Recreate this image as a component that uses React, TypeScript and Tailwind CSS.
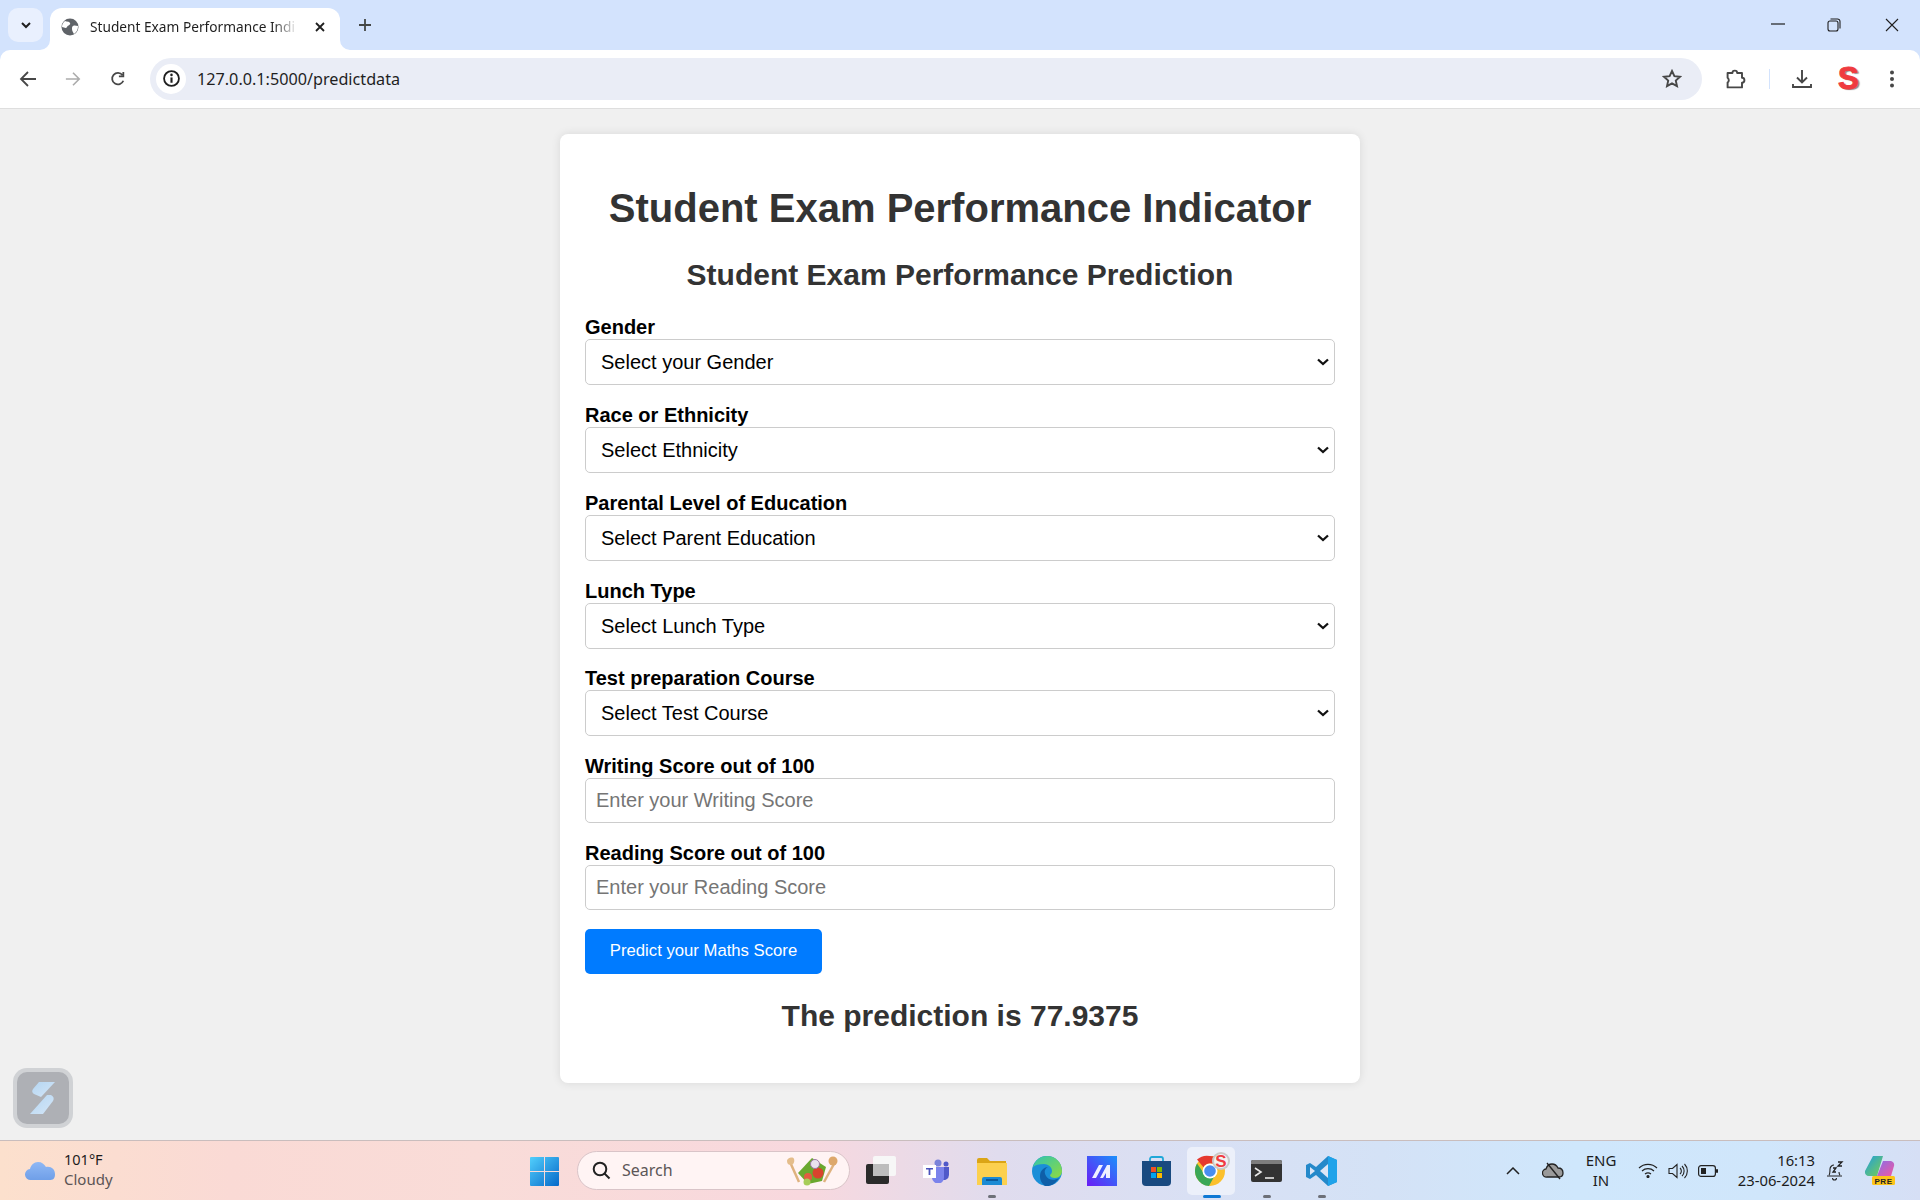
import React from "react";

const sans = "font-['Liberation_Sans',Arial,sans-serif]";
const ui = "font-['Noto_Sans','Open_Sans',sans-serif]";

function Sel({ label, text, gap = "mb-[19px]" }: { label: string; text: string; gap?: string }) {
  return (
    <div className={gap}>
      <label className="block text-[20px] leading-[23px] font-bold text-black">{label}</label>
      <div className="relative">
        <select className="block w-full h-[46px] pl-[15px] pr-[30px] text-[20px] bg-white text-black border border-[#cccccc] rounded-[5px] appearance-none">
          <option>{text}</option>
        </select>
        <svg width="12" height="8" viewBox="0 0 12 8" className="absolute right-[6px] top-[19px] pointer-events-none">
          <path d="M1 1.500l5 4.500 5-4.500" fill="none" stroke="#111" strokeWidth="2.300" />
        </svg>
      </div>
    </div>
  );
}

function Inp({ label, text, gap }: { label: string; text: string; gap: string }) {
  return (
    <div className={gap}>
      <label className="block text-[20px] leading-[23px] font-bold text-black">{label}</label>
      <input
        type="number"
        placeholder={text}
        className="block w-full h-[45px] px-[10px] text-[20px] bg-white border border-[#cccccc] rounded-[5px] placeholder:text-[#757575] appearance-none"
      />
    </div>
  );
}

function TabBar() {
  return (
    <div className="h-[50px] bg-[#d3e3fd] flex relative">
      <div className="w-[35px] h-[34px] ml-[8px] mt-[8px] rounded-[10px] bg-[#e9f0fe] flex items-center justify-center">
        <svg width="12" height="12" viewBox="0 0 12 12"><path d="M2 4l4 4 4-4" fill="none" stroke="#1f1f1f" strokeWidth="2" /></svg>
      </div>
      <div className="relative w-[290px] h-[42px] ml-[7px] mt-[8px] bg-white rounded-t-[12px] flex items-center pl-[11px]">
        <svg width="10" height="10" viewBox="0 0 10 10" className="absolute left-[-10px] bottom-0"><path d="M10 0v10H0a10 10 0 0 0 10-10z" fill="#fff" /></svg>
        <svg width="10" height="10" viewBox="0 0 10 10" className="absolute right-[-10px] bottom-0"><path d="M0 0v10h10A10 10 0 0 1 0 0z" fill="#fff" /></svg>
        <svg width="18" height="18" viewBox="0 0 18 18" className="mr-[11px] -mt-[5px]">
          <circle cx="9" cy="9" r="8.500" fill="#5f6368" />
          <path d="M4 3c2 1 4 0 5 2s-2 2-3 4-3 0-5 0c0-3 1-4 3-6zM12 8c2-1 3 0 5 0 0 3-1 6-4 8-1-2-2-3-2-5s0-2 1-3z" fill="#fff" />
        </svg>
        <span className={`w-[208px] overflow-hidden whitespace-nowrap text-[13.700px] leading-[20px] text-[#1f1f1f] -mt-[5px] [mask-image:linear-gradient(90deg,#000_88%,transparent)] ${ui}`}>Student Exam Performance Indi</span>
        <svg width="12" height="12" viewBox="0 0 12 12" className="ml-[16px] -mt-[5px]"><path d="M2 2l8 8M10 2l-8 8" stroke="#1f1f1f" strokeWidth="1.800" /></svg>
      </div>
      <svg width="14" height="14" viewBox="0 0 14 14" className="ml-[18px] mt-[18px]"><path d="M7 1v12M1 7h12" stroke="#444746" strokeWidth="1.800" /></svg>
      <div className="ml-auto flex items-start">
        <svg width="14" height="2" className="mt-[23px] mr-[42px]"><path d="M0 1h14" stroke="#1f1f1f" strokeWidth="1.200" /></svg>
        <svg width="14" height="14" viewBox="0 0 14 14" className="mt-[18px] mr-[44px]" fill="none" stroke="#1f1f1f" strokeWidth="1.100">
          <rect x="1" y="3" width="10" height="10" rx="2" />
          <path d="M3.500 1h7a2.500 2.500 0 0 1 2.500 2.500v7" />
        </svg>
        <svg width="14" height="14" viewBox="0 0 14 14" className="mt-[18px] mr-[21px]"><path d="M1 1l12 12M13 1L1 13" stroke="#1f1f1f" strokeWidth="1.100" /></svg>
      </div>
    </div>
  );
}

function ToolBar() {
  return (
    <div className="h-[59px] bg-[#d3e3fd]">
      <div className="h-[59px] bg-white rounded-t-[10px] border-b border-[#dedede] flex items-center pb-[1px]">
        <svg width="18" height="18" viewBox="0 0 18 18" className="ml-[19px] mr-[28px]" fill="none" stroke="#474747" strokeWidth="1.800"><path d="M17 9H2M9 2L2 9l7 7" /></svg>
        <svg width="16" height="16" viewBox="0 0 18 18" className="mr-[29px]" fill="none" stroke="#acacac" strokeWidth="1.800"><path d="M1 9h15M9 2l7 7-7 7" /></svg>
        <svg width="16" height="16" viewBox="0 0 18 18" className="mr-[24px]" fill="none" stroke="#474747" strokeWidth="2"><path d="M15 11a6.500 6.500 0 1 1-1-6.500M15 1v5h-5" /></svg>
        <div className="w-[1552px] h-[42px] rounded-full bg-[#eaedf6] flex items-center pl-[6px]">
          <div className="w-[30px] h-[30px] rounded-full bg-white flex items-center justify-center">
            <svg width="17" height="17" viewBox="0 0 16 16"><circle cx="8" cy="8" r="7" fill="none" stroke="#1f1f1f" strokeWidth="1.700" /><path d="M8 7v5" stroke="#1f1f1f" strokeWidth="2" /><circle cx="8" cy="4.600" r="1.200" fill="#1f1f1f" /></svg>
          </div>
          <span className={`ml-[11px] mt-[1px] text-[16.200px] text-[#1f1f1f] ${ui}`}>127.0.0.1:5000/predictdata</span>
          <svg width="20" height="20" viewBox="0 0 20 20" className="ml-auto mr-[20px]" fill="none" stroke="#474747" strokeWidth="1.900"><path d="M10 2l2.400 5.200 5.600.6-4.200 3.800 1.200 5.600L10 14.400l-5 2.800 1.200-5.600L2 7.800l5.600-.6z" /></svg>
        </div>
        <svg width="24" height="24" viewBox="0 0 20 20" className="ml-[22px]" fill="none" stroke="#474747" strokeWidth="1.600"><path d="M3 5h4a2 2 0 0 1 4 0h4v4a2 2 0 0 1 0 4v4H3v-4a2.500 2.500 0 0 0 0-4z" strokeLinejoin="round" /></svg>
        <div className="w-[1px] h-[20px] bg-[#d3e3fd] ml-[21px]" />
        <svg width="20" height="20" viewBox="0 0 20 20" className="ml-[22px]" fill="none" stroke="#474747" strokeWidth="1.900"><path d="M10 1v12M5 8.500l5 5 5-5M1 15v3h18v-3" /></svg>
        <span className={`ml-[26px] w-[20px] text-center text-[31px] leading-[30px] font-bold text-[#ef3b40] [text-shadow:2px_1px_1px_#888] [-webkit-text-stroke:1px_#ef3b40] ${sans}`}>S</span>
        <svg width="6" height="18" viewBox="0 0 6 18" className="ml-[31px]" fill="#474747"><circle cx="3" cy="2.500" r="2" /><circle cx="3" cy="9" r="2" /><circle cx="3" cy="15.500" r="2" /></svg>
      </div>
    </div>
  );
}

function Slot({ children, dot, active }: { children: React.ReactNode; dot?: boolean; active?: boolean }) {
  return (
    <div className="relative w-[55px] h-[60px] flex items-center justify-center">
      {active && <div className="absolute left-[3px] top-[6px] w-[48px] h-[48px] rounded-[5px] bg-white/50" />}
      <div className="relative flex">{children}</div>
      {dot && <div className="absolute left-1/2 -translate-x-1/2 bottom-[3px] w-[8px] h-[3px] rounded-full bg-[#6d7078]" />}
      {active && <div className="absolute left-1/2 -translate-x-1/2 bottom-[3px] w-[18px] h-[3px] rounded-full bg-[#0f78d4]" />}
    </div>
  );
}

function Taskbar() {
  return (
    <div className={`h-[60px] border-t border-[#c9bdbd] flex items-start bg-[linear-gradient(90deg,#fce0cd_0%,#fadad5_12%,#f9dcd8_25%,#f8d8de_42%,#e0dcee_52%,#d9e0f4_62%,#d4e2f6_72%,#cfe7fc_82%,#d0e6fb_92%,#d6dff5_100%)] ${ui}`}>
      <div className="w-[530px] flex items-center h-[59px]">
        <svg width="31" height="20" viewBox="0 0 31 20" className="ml-[25px] mr-[8px]">
          <defs><linearGradient id="cl" x1="0" y1="0" x2="0" y2="1"><stop offset="0" stopColor="#8fb8f5" /><stop offset="1" stopColor="#6f9fe8" /></linearGradient></defs>
          <path d="M6 19a5.500 5.500 0 0 1-1-11c1-4 4-7 8-7 4 0 6 2 8 5 5-1 9 2 9 7s-2 6-6 6z" fill="url(#cl)" />
        </svg>
        <div className="flex flex-col text-[15px] leading-[20px] -mt-[4px]">
          <span className="text-[#1c1c1c] text-[14.500px]">101°F</span>
          <span className="text-[#5b5555]">Cloudy</span>
        </div>
      </div>
      <svg width="29" height="29" viewBox="0 0 29 29" className="mt-[16px]">
        <defs><linearGradient id="wn" x1="0" y1="0" x2="1" y2="1"><stop offset="0" stopColor="#52cffc" /><stop offset="1" stopColor="#0669c9" /></linearGradient></defs>
        <path d="M1 0h13v14H0V1a1 1 0 0 1 1-1zM15 0h13a1 1 0 0 1 1 1v13H15zM0 15h14v14H1a1 1 0 0 1-1-1zM15 15h14v13a1 1 0 0 1-1 1H15z" fill="url(#wn)" />
      </svg>
      <div className="ml-[18px] mt-[10px] w-[273px] h-[39px] rounded-full bg-[#fff4f4] border border-[#d9c4c8] flex items-center pl-[14px]">
        <svg width="19" height="19" viewBox="0 0 19 19" fill="none" stroke="#222" strokeWidth="2"><circle cx="8" cy="8" r="6.300" /><path d="M12.500 12.500l5 5" /></svg>
        <span className="ml-[11px] -mt-[1px] text-[16px] text-[#5c5657]">Search</span>
        <svg width="52" height="30" viewBox="0 0 52 30" className="ml-auto mr-[11px]">
          <path d="M4 6l9 20" stroke="#dfb27e" strokeWidth="2.500" />
          <path d="M1 5c0-3 6-5 7-2s-1 6-3 6-4-1-4-4z" fill="#e4bd8b" />
          <path d="M48 8L38 26" stroke="#dfb27e" strokeWidth="2.500" />
          <circle cx="47" cy="5" r="4.500" fill="#dda86b" />
          <path d="M12 17L26 2l14 9-4 14-14 3z" fill="#6aa82f" />
          <circle cx="32" cy="17" r="5.500" fill="#d9432d" />
          <circle cx="22" cy="21" r="4" fill="#e25b42" />
          <circle cx="29" cy="8" r="4.500" fill="#e9e2ee" stroke="#9c7aa7" />
          <circle cx="21" cy="26" r="3.500" fill="#a7cd59" />
        </svg>
      </div>
      <svg width="30" height="29" viewBox="0 0 30 29" className="ml-[16px] mt-[15px]">
        <rect x="7" y="0" width="23" height="20" rx="2" fill="#f7f7f7" />
        <rect x="0" y="8" width="23" height="20" rx="2" fill="#2b2b2b" />
        <rect x="7" y="8" width="16" height="12" fill="#bdbdbd" />
      </svg>
      <div className="w-[13px]" />
      <Slot>
        <svg width="27" height="24" viewBox="0 0 27 24">
          <circle cx="15" cy="4" r="3.500" fill="#7b83d9" />
          <circle cx="23" cy="5" r="2.500" fill="#5059c9" />
          <path d="M18 8h8v8a5 5 0 0 1-8 4z" fill="#5059c9" />
          <path d="M8 8h13v10a6 6 0 0 1-12 1z" fill="#7b83eb" />
          <rect x="0" y="6" width="13" height="13" fill="#fff" />
          <path d="M3 9h7v1.600H7.400V16H5.600v-5.400H3z" fill="#4b53bc" />
        </svg>
      </Slot>
      <Slot dot>
        <svg width="30" height="27" viewBox="0 0 30 27">
          <path d="M0 2a2 2 0 0 1 2-2h8l3 3h16v4H0z" fill="#dba516" />
          <path d="M0 5h30v22H0z" fill="#fcd04e" />
          <path d="M5 27v-6a2 2 0 0 1 2-2h16a2 2 0 0 1 2 2v6z" fill="#1b8ad4" />
          <path d="M9 22h12" stroke="#0b5a9b" strokeWidth="2" />
        </svg>
      </Slot>
      <Slot>
        <svg width="30" height="30" viewBox="0 0 30 30">
          <defs>
            <linearGradient id="ed" x1="0" y1="0" x2="1" y2="1"><stop offset="0" stopColor="#2fc4b2" /><stop offset="1" stopColor="#8fdb3f" /></linearGradient>
          </defs>
          <circle cx="15" cy="15" r="15" fill="#1b8fd8" />
          <path d="M1 11C3 3 10 0 15 0c8 0 15 6 15 15 0 4-3 7-7 7-3 0-5-1-5-3 1-1 2-2 2-4 0-4-4-7-8-7-5 0-9 1-11 3z" fill="url(#ed)" />
          <path d="M13 30c-4-3-5-7-5-10 0-6 5-9 8-9-4 2-4 6-2 9 2 4 8 5 13 2-3 5-8 9-14 8z" fill="#0f5fa8" />
        </svg>
      </Slot>
      <Slot>
        <svg width="30" height="30" viewBox="0 0 30 30">
          <defs><linearGradient id="ma" x1="0" y1="1" x2="1" y2="0"><stop offset="0" stopColor="#6a1cf5" /><stop offset="1" stopColor="#1b90fb" /></linearGradient></defs>
          <rect width="30" height="30" fill="url(#ma)" />
          <path d="M5 22l7-13h4L9 22zM13 22l7-13h3v13h-4v-5l-3 5z" fill="#eef0ff" />
        </svg>
      </Slot>
      <Slot>
        <svg width="29" height="30" viewBox="0 0 29 30">
          <path d="M8 6V3a2 2 0 0 1 2-2h9a2 2 0 0 1 2 2v3" fill="none" stroke="#20a8d8" strokeWidth="1.800" />
          <path d="M0 5h29v21a4 4 0 0 1-4 4H4a4 4 0 0 1-4-4z" fill="#194a80" />
          <rect x="9" y="11" width="5" height="5" fill="#f25022" />
          <rect x="15" y="11" width="5" height="5" fill="#7fba00" />
          <rect x="9" y="17" width="5" height="5" fill="#00a4ef" />
          <rect x="15" y="17" width="5" height="5" fill="#ffb900" />
        </svg>
      </Slot>
      <Slot active>
        <svg width="36" height="36" viewBox="0 0 36 36" className="mt-[-2px] ml-[2px]">
          <circle cx="15" cy="19" r="15" fill="#fbc02d" />
          <path d="M15 4a15 15 0 0 1 13 7.500H15a7.500 7.500 0 0 0-6.500 3.700L2 7.500A15 15 0 0 1 15 4z" fill="#e5392f" />
          <path d="M2 11.500a15 15 0 0 0 12 22.500l6-11-12-3z" fill="#3aa757" />
          <circle cx="15" cy="19" r="7.500" fill="#fff" />
          <circle cx="15" cy="19" r="5.800" fill="#4a8ef0" />
          <circle cx="26" cy="9" r="9" fill="#c9c9c9" />
          <circle cx="26" cy="9" r="7" fill="#f2f2f2" />
          <text x="26" y="15" textAnchor="middle" fontSize="17" fontWeight="900" fill="#ef3b40" fontFamily="Liberation Sans">S</text>
        </svg>
      </Slot>
      <Slot dot>
        <svg width="31" height="22" viewBox="0 0 31 22">
          <rect width="31" height="22" rx="2" fill="#333" />
          <path d="M0 2a2 2 0 0 1 2-2h27a2 2 0 0 1 2 2v2H0z" fill="#7d7d7d" />
          <path d="M4 8l6 4-6 4" fill="none" stroke="#e8e8e8" strokeWidth="1.600" />
          <path d="M14 18h9" stroke="#e8e8e8" strokeWidth="1.600" />
        </svg>
      </Slot>
      <Slot dot>
        <svg width="31" height="30" viewBox="0 0 31 30">
          <path d="M22 0l9 4v22l-9 4-12-11-6 4-4-2v-12l4-2 6 4z" fill="#2489ca" />
          <path d="M22 0l9 4v22l-9 4z" fill="#1fa3ea" />
          <path d="M22 8l-8 7 8 7z" fill="#dde6f6" />
          <path d="M4 11l5 4-5 4z" fill="#dde6f6" />
        </svg>
      </Slot>
      <div className="ml-[157px] flex items-center h-[59px] text-[#1c1c1c]">
        <svg width="14" height="8" viewBox="0 0 14 8" fill="none" stroke="#222" strokeWidth="1.500" className="mr-[22px]"><path d="M1 7l6-6 6 6" /></svg>
        <svg width="22" height="18" viewBox="0 0 22 18" className="mr-[21px]">
          <path d="M5 15a4 4 0 0 1-1-8c1-3 3-5 6-5 3 0 5 2 6 4 3 0 5 2 5 5s-2 4-4 4z" fill="#9a9a9a" stroke="#222" strokeWidth="1.300" />
          <path d="M5 1l13 16" stroke="#222" strokeWidth="1.300" />
        </svg>
        <div className="w-[32px] text-center text-[15px] leading-[20px] mr-[21px] -mt-[2px]">ENG<br />IN</div>
        <svg width="20" height="15" viewBox="0 0 20 15" fill="none" stroke="#222" strokeWidth="1.200" className="mr-[10px]">
          <path d="M1 5a13 13 0 0 1 18 0M4 8a9 9 0 0 1 12 0M7 11a5 5 0 0 1 6 0" />
          <circle cx="10" cy="13.500" r="1" fill="#222" />
        </svg>
        <svg width="20" height="16" viewBox="0 0 20 16" fill="none" stroke="#222" strokeWidth="1.100" className="mr-[10px]">
          <path d="M1 5.500h3.500L9 1.500v13l-4.500-4H1zM12 5a4 4 0 0 1 0 6M14 3a7 7 0 0 1 0 10M16.500 1a10 10 0 0 1 0 14" />
        </svg>
        <svg width="20" height="12" viewBox="0 0 20 12" className="mr-[17px]">
          <rect x=".6" y=".6" width="16.800" height="10.800" rx="2.500" fill="none" stroke="#222" strokeWidth="1.200" />
          <rect x="3" y="3" width="5" height="6" fill="#222" />
          <rect x="18" y="4" width="2" height="4" rx="1" fill="#222" />
        </svg>
        <div className="w-[80px] text-right text-[14.800px] leading-[20px] mr-[11px] -mt-[2px]">16:13<br /><span className="whitespace-nowrap">23-06-2024</span></div>
        <svg width="18" height="20" viewBox="0 0 18 20" fill="none" stroke="#222" strokeWidth="1.100" className="mr-[21px]">
          <path d="M3 14c1-1 1-3 1-6 0-2 2-4 4-4M14 14c-1-1-1-2-1-3M1 15h15M6.500 17a2 2 0 0 0 4 0" />
          <path d="M7 7h3l-3 4h3M12 1h4l-4 4h4" strokeWidth="1.300" />
        </svg>
        <svg width="30" height="29" viewBox="0 0 30 29">
          <defs>
            <linearGradient id="co1" x1="0" y1="0" x2="1" y2="1"><stop offset="0" stopColor="#1f9de0" /><stop offset="1" stopColor="#7ad04e" /></linearGradient>
            <linearGradient id="co2" x1="0" y1="0" x2="1" y2="1"><stop offset="0" stopColor="#8a6ee8" /><stop offset="1" stopColor="#f058a0" /></linearGradient>
          </defs>
          <path d="M8 0h10l-6 20H4a4 4 0 0 1-4-5z" fill="url(#co1)" />
          <path d="M18 5h8a4 4 0 0 1 3 5l-3 10H12z" fill="url(#co2)" />
          <rect x="7" y="20" width="23" height="9" rx="1.500" fill="#fcc419" />
          <text x="18.500" y="27.500" textAnchor="middle" fontSize="8" fontWeight="900" fill="#222" fontFamily="Liberation Sans" letterSpacing=".6">PRE</text>
        </svg>
      </div>
    </div>
  );
}

export default function App() {
  return (
    <div className={`w-[1920px] h-[1200px] flex flex-col overflow-hidden bg-[#f0f0f0] relative ${sans}`}>
      <TabBar />
      <ToolBar />
      <main className="flex-1 flex justify-center items-start pt-[25px]">
        <div className="w-[800px] h-[949px] bg-white rounded-[8px] shadow-[0_0_10px_rgba(0,0,0,0.1)] px-[25px] pt-[25px]">
          <h1 className="mt-[26px] mb-[27px] text-center text-[40px] leading-[46px] font-bold text-[#333333]">Student Exam Performance Indicator</h1>
          <h2 className="mb-[24px] text-center text-[30px] leading-[34px] font-bold text-[#333333]">Student Exam Performance Prediction</h2>
          <Sel label="Gender" text="Select your Gender" />
          <Sel label="Race or Ethnicity" text="Select Ethnicity" />
          <Sel label="Parental Level of Education" text="Select Parent Education" />
          <Sel label="Lunch Type" text="Select Lunch Type" gap="mb-[18px]" />
          <Sel label="Test preparation Course" text="Select Test Course" gap="mb-[19px]" />
          <Inp label="Writing Score out of 100" text="Enter your Writing Score" gap="mb-[19px]" />
          <Inp label="Reading Score out of 100" text="Enter your Reading Score" gap="mb-[18px]" />
          <button className="block w-[237px] h-[45px] mt-[19px] pb-[2px] bg-[#007bff] text-white text-[16.700px] rounded-[5px]">Predict your Maths Score</button>
          <h2 className="mt-[25px] text-center text-[30px] leading-[34px] font-bold text-[#333333]">The prediction is 77.9375</h2>
        </div>
      </main>
      <Taskbar />
      <div className="absolute left-[13px] top-[1068px] w-[60px] h-[60px] rounded-[14px] bg-[#d0d2d5] flex items-center justify-center">
        <div className="w-[52px] h-[52px] rounded-[10px] bg-[#aeb0b5] flex items-center justify-center">
          <svg width="26" height="32" viewBox="0 0 26 32">
            <defs><linearGradient id="lg" x1="0" y1="0" x2="1" y2="1"><stop offset="0" stopColor="#b5d6f2" /><stop offset="1" stopColor="#d4e6f7" /></linearGradient></defs>
            <path d="M9 0h16L11 15 4 12q-3-2-1-5z" fill="url(#lg)" />
            <path d="M21 13q4 2 2 6L13 32H0l17-19z" fill="url(#lg)" />
          </svg>
        </div>
      </div>
    </div>
  );
}
